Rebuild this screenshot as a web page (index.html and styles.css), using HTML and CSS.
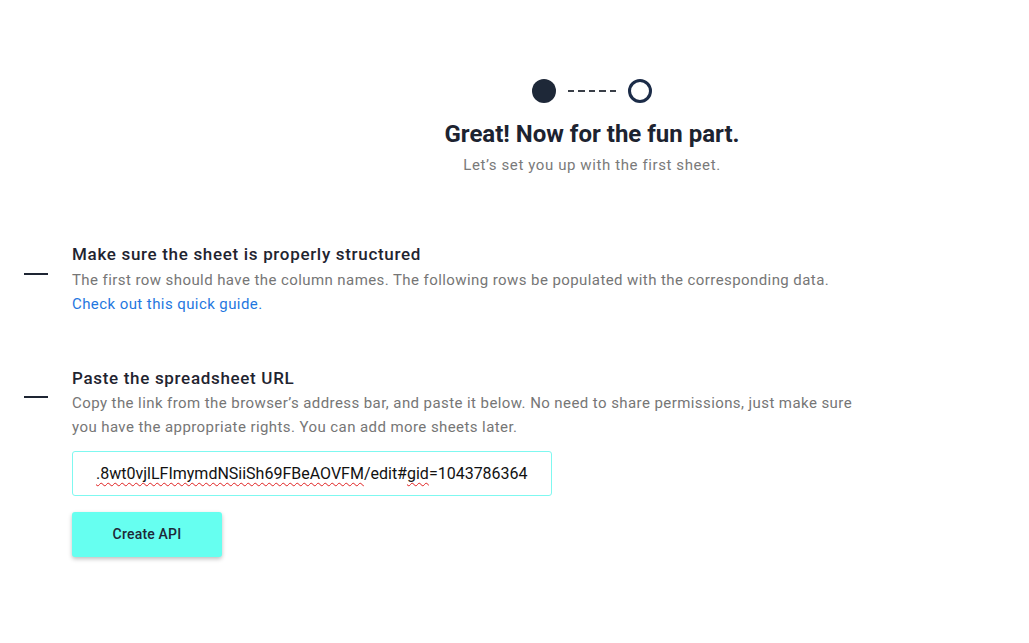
FILE: index.html
```html
<!DOCTYPE html>
<html>
<head>
<meta charset="utf-8">
<link rel="stylesheet" href="styles.css">
</head>
<body>
<div class="page">
  <header class="intro">
    <div class="stepper">
      <span class="step step-done"></span>
      <span class="dashes"><i></i><i></i><i></i><i></i><i></i></span>
      <span class="step step-current"></span>
    </div>
    <h1 class="title">Great! Now for the fun part.</h1>
    <p class="subtitle">Let’s set you up with the first sheet.</p>
  </header>

  <section class="item item-first">
    <span class="marker"></span>
    <div class="item-body">
      <h2 class="item-title">Make sure the sheet is properly structured</h2>
      <p class="item-text">The first row should have the column names. The following rows be populated with the corresponding data.<br><a class="link" href="#">Check out this quick guide.</a></p>
    </div>
  </section>

  <section class="item item-second">
    <span class="marker"></span>
    <div class="item-body">
      <h2 class="item-title">Paste the spreadsheet URL</h2>
      <p class="item-text">Copy the link from the browser’s address bar, and paste it below. No need to share permissions, just make sure you have the appropriate rights. You can add more sheets later.</p>
      <div class="url-field"><span class="typo">.8wt0vjlLFImymdNSiiSh69FBeAOVFM</span>/edit#<span class="typo">gid</span>=1043786364</div>
      <button class="btn">Create API</button>
    </div>
  </section>
</div>
</body>
</html>
```

FILE: styles.css
```css
* { box-sizing: border-box; }
html, body { margin: 0; padding: 0; background: #fff; }
body { font-family: Roboto, "Noto Sans", Arial, sans-serif; color: #1f2530; }

.page { width: 1029px; height: 643px; overflow: hidden; }

.intro {
  display: flex;
  flex-direction: column;
  align-items: center;
  padding: 79px 0 0 155px;
}
.stepper { display: flex; align-items: center; height: 24px; }
.step { width: 24px; height: 24px; border-radius: 50%; display: block; }
.step-done { background: #1e2838; }
.step-current { border: 3px solid #1c2c48; }
.dashes { display: flex; gap: 4px; margin: 0 12px; }
.dashes i { display: block; width: 6.4px; height: 2px; background: #3a3f48; }

.title {
  margin: 17px 0 0;
  font-size: 24px;
  font-weight: 700;
  line-height: 28px;
  color: #1d2330;
  letter-spacing: 0;
}
.subtitle {
  margin: 7px 0 0;
  font-size: 15px;
  line-height: 20px;
  color: #7a7a7a;
  letter-spacing: 0.6px;
}

.item { display: flex; align-items: flex-start; }
.item-first { margin-top: 68px; }
.item-second { margin-top: 51px; }
.marker { width: 24px; height: 2px; background: #1e2533; margin: 30px 24px 0 24px; flex: none; }
.item-second .marker { margin-top: 29px; }
.item-title {
  margin: 0;
  font-size: 17px;
  font-weight: 500;
  line-height: 22px;
  color: #1f2430;
  letter-spacing: 0.68px;
}
.item-text {
  margin: 3px 0 0;
  font-size: 15px;
  line-height: 24px;
  color: #767676;
  width: 785px;
  letter-spacing: 0.42px;
}
.item-second .item-text { margin-top: 2px; }
.link { color: #1f77e0; text-decoration: none; }

.url-field {
  margin-top: 12px;
  width: 480px;
  height: 45px;
  border: 1px solid #7ff8f0;
  border-radius: 3px;
  padding: 0 0 0 23px;
  display: flex;
  align-items: center;
  font-size: 16px;
  color: #111;
  white-space: nowrap;
  overflow: hidden;
}
.typo {
  text-decoration: underline wavy #e02020;
  text-decoration-thickness: 1px;
  text-underline-offset: 3px;
}

.btn {
  display: block;
  margin-top: 16px;
  width: 150px;
  height: 45px;
  border: none;
  border-radius: 3px;
  background: #66fff0;
  box-shadow: 0 2px 4px rgba(0,0,0,0.25);
  font-family: Roboto, "Noto Sans", Arial, sans-serif;
  font-size: 14px;
  font-weight: 500;
  color: #1e2838;
  letter-spacing: 0.2px;
  padding: 0 0 2px;
  cursor: pointer;
}
```
